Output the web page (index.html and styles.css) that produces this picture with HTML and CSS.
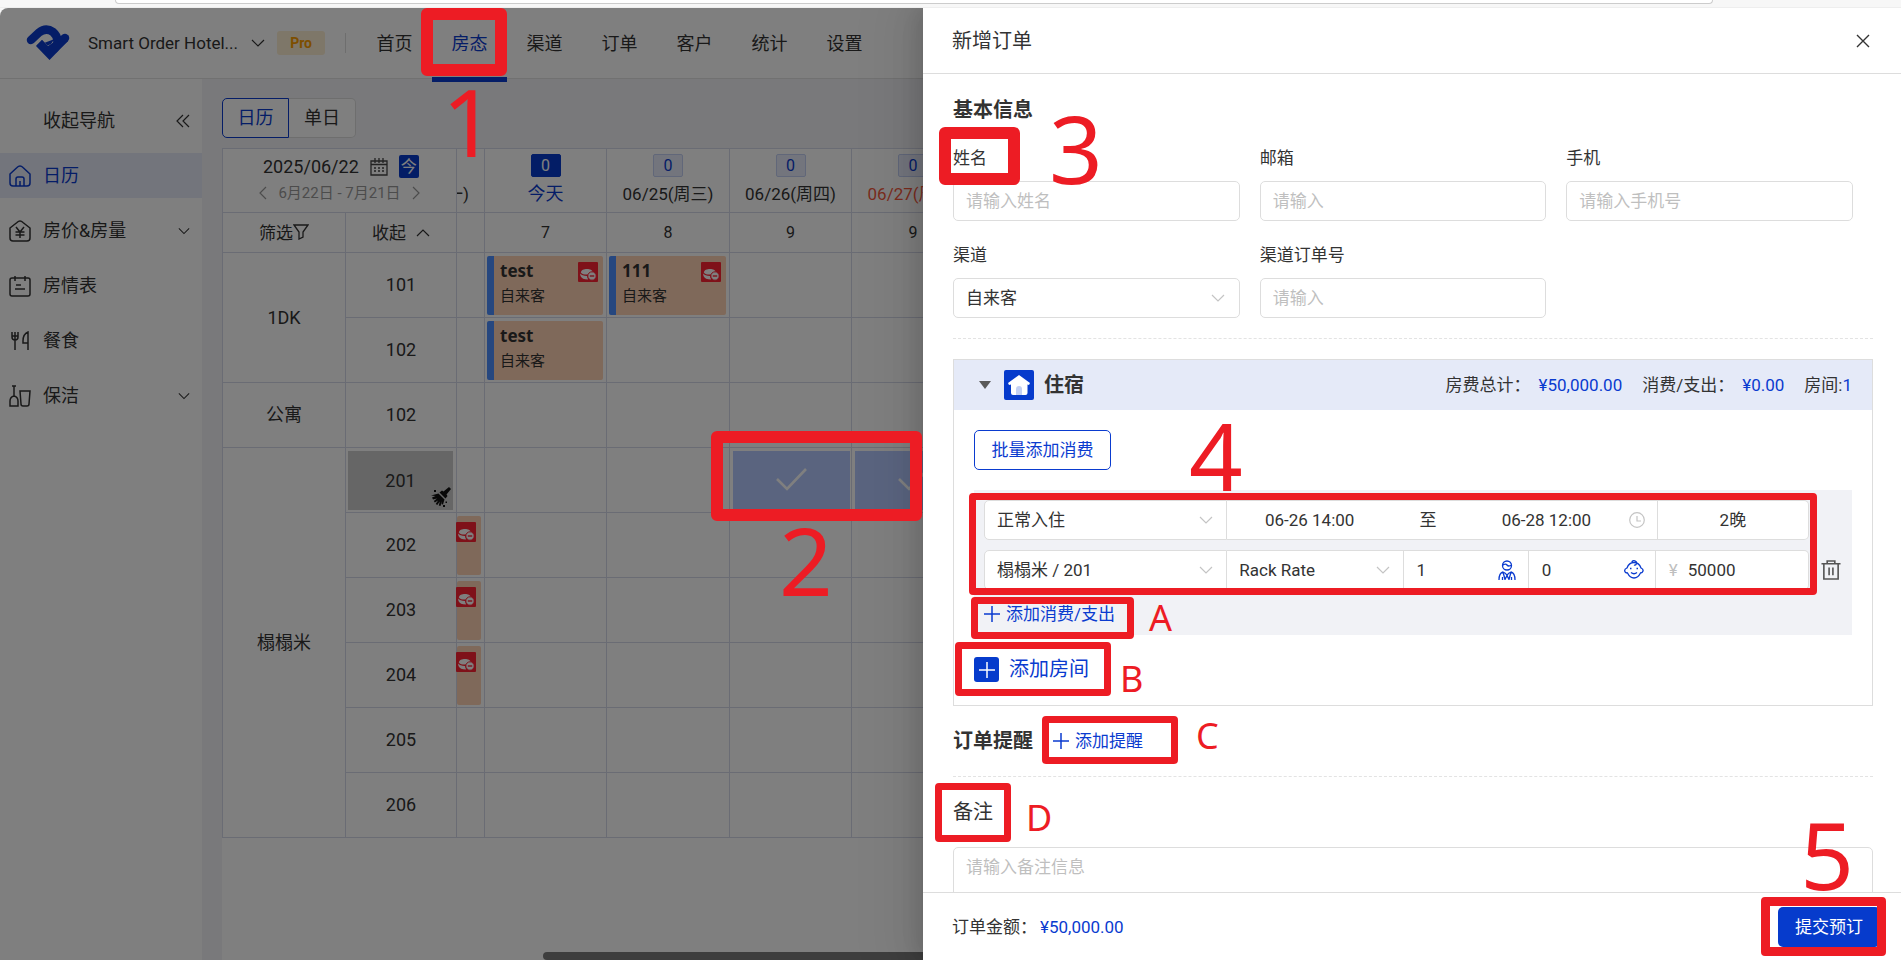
FILE: index.html
```html
<!DOCTYPE html>
<html lang="zh-CN">
<head>
<meta charset="utf-8">
<title>新增订单</title>
<link rel="stylesheet" href="styles.css">
</head>
<body>
<svg class="sprite" aria-hidden="true">
  <symbol id="chev" viewBox="0 0 14 14"><path d="M1 4l6 6 6-6" fill="none" stroke="currentColor" stroke-width="1.2"/></symbol>
  <symbol id="plus" viewBox="0 0 16 16"><path d="M8 0v16M0 8h16" fill="none" stroke="currentColor" stroke-width="1.5"/></symbol>
  <symbol id="tick" viewBox="0 0 32 24"><path d="M1 11l10 10L30 1" fill="none" stroke="currentColor" stroke-width="2.6"/></symbol>
  <symbol id="unpaid" viewBox="0 0 20 20"><rect width="20" height="20" rx="1" fill="#ff2233"/><path d="M2.800 10.500C3 8 6 7 9 7s5.500 1.200 5.500 2.800S12 12.500 9.500 12.600 4 12.500 2.800 10.500z" fill="#fff"/><path d="M2 11.500q2 2.300 7 2.500l1 3.500q-6 0-7.500-3.500z" fill="#fff"/><circle cx="14" cy="14" r="4.200" fill="#fff" stroke="#ff2233"/><path d="M11.800 14h4.400" stroke="#ff2233" stroke-width="1.400"/></symbol>
</svg>

<div class="browser-bar"><div class="address"></div></div>

<div class="app">
  <header class="topbar">
    <svg class="logo" viewBox="0 0 44 36"><path d="M5 15l8-7.500Q20 2 27 7q6 5 4 13l-3 4" fill="none" stroke="#0a3bcf" stroke-width="8.500" stroke-linecap="round" stroke-linejoin="round"/><path d="M10 21l6-6 5.500 5.500q4-1 5.500-4.500l4 1 7-6.500" fill="#0a3bcf"/><path d="M30 21l9-8" stroke="#0a3bcf" stroke-width="8.500" stroke-linecap="round"/><path d="M10 21l6-6 6 6 6-4 14-1L23.500 35z" fill="#0a3bcf"/></svg>
    <button class="hotel" type="button">Smart Order Hotel... <svg class="i14"><use href="#chev"/></svg></button>
    <span class="pro">Pro</span>
    <nav class="menu">
      <a href="#">首页</a><a href="#" class="on">房态</a><a href="#">渠道</a><a href="#">订单</a><a href="#">客户</a><a href="#">统计</a><a href="#">设置</a>
    </nav>
  </header>

  <div class="body">
    <aside class="side">
      <button class="fold" type="button">收起导航 <svg class="i14" viewBox="0 0 14 14"><path d="M7 1L1 7l6 6M13 1L7 7l6 6" fill="none" stroke="#333" stroke-width="1.2"/></svg></button>
      <a href="#" class="on"><svg class="i22" viewBox="0 0 22 22"><path d="M1 9l7-6.500q3-3 6 0L21 9v9q0 3-3 3H4q-3 0-3-3zM7 21v-7q0-2 2-2h4q2 0 2 2v7M11 16v5"/></svg>日历</a>
      <a href="#"><svg class="i22" viewBox="0 0 22 22"><path d="M1 8l7-5.500q3-3 6 0L21 8v10q0 3-3 3H4q-3 0-3-3zM7 7l4 5 4-5M6.500 12h9M6.500 15h9M11 12v6"/></svg>房价&amp;房量<svg class="i12"><use href="#chev"/></svg></a>
      <a href="#"><svg class="i22" viewBox="0 0 22 22"><path d="M3 3h16q2 0 2 2v14q0 2-2 2H3q-2 0-2-2V5q0-2 2-2zM6 1v5M16 1v5M7 10h5M6 14h10"/></svg>房情表</a>
      <a href="#"><svg class="i22" viewBox="0 0 22 22"><path d="M3 2v5q0 3 3 3t3-3V2M6 2v18M3 6h6M19 20V2q-5 2-5 9v2h5"/></svg>餐食</a>
      <a href="#"><svg class="i22" viewBox="0 0 22 22"><path d="M5 1v10q-4 1-4 5v5h8v-5q0-4-4-5M3 1h4M11 6h10l-1 13q0 2-2 2h-4q-2 0-2-2z"/></svg>保洁<svg class="i12"><use href="#chev"/></svg></a>
    </aside>

    <main class="main">
      <div class="tabs"><button class="on" type="button">日历</button><button type="button">单日</button></div>
      <div class="board">
        <table class="cal">
          <colgroup><col class="c-type"><col class="c-room"><col class="c-cut"><col class="c-day"><col class="c-day wide"><col class="c-day"><col class="c-day wide"><col class="c-day"><col></colgroup>
          <thead>
            <tr class="dates">
              <th colspan="2">
                <div class="picker">2025/06/22
                  <svg class="i18" viewBox="0 0 18 18"><path d="M1 3h16v14H1zM1 6.500h16M5 0v5M9 0v5M13 0v5M4 10h2M8 10h2M12 10h2M4 13h2M8 13h2M12 13h2" fill="none" stroke="#444" stroke-width="1.3"/></svg>
                  <button class="today" type="button">今</button></div>
                <div class="range"><svg class="i14 left"><use href="#chev"/></svg>6月22日 - 7月21日<svg class="i14 right"><use href="#chev"/></svg></div>
              </th>
              <th class="cut"><span>06/23(周一)</span></th>
              <th class="now"><b>0</b>今天</th>
              <th><b>0</b>06/25(周三)</th>
              <th><b>0</b>06/26(周四)</th>
              <th class="busy"><b>0</b>06/27(周五)</th>
              <th class="busy"><b>0</b>06/28(周六)</th><th></th>
            </tr>
            <tr class="counts">
              <th class="cjk">筛选<svg class="i16" viewBox="0 0 16 16"><path d="M1 1h14L10 8v5l-4 2V8z" fill="none" stroke="#333" stroke-width="1.3"/></svg></th>
              <th class="cjk">收起 <svg class="i14 up"><use href="#chev"/></svg></th>
              <th></th><th>7</th><th>8</th><th>9</th><th>9</th><th>9</th><th></th>
            </tr>
          </thead>
          <tbody>
            <tr><th rowspan="2">1DK</th><th>101</th><td></td>
              <td><div class="stay"><strong>test</strong><small>自来客</small><svg class="tag"><use href="#unpaid"/></svg></div></td>
              <td><div class="stay"><strong>111</strong><small>自来客</small><svg class="tag"><use href="#unpaid"/></svg></div></td>
              <td></td><td></td><td></td><td></td></tr>
            <tr><th>102</th><td></td><td><div class="stay"><strong>test</strong><small>自来客</small></div></td><td></td><td></td><td></td><td></td><td></td></tr>
            <tr><th>公寓</th><th>102</th><td></td><td></td><td></td><td></td><td></td><td></td><td></td></tr>
            <tr><th rowspan="6">榻榻米</th><th><div class="dirty">201<svg class="broom" viewBox="0 0 20 20"><path d="M18 0l2 2-4.500 5.500 1 1.500-2 2.500-6-6L11 3.500l1.500 1z" fill="#111"/><path d="M7.500 6.500l6 6-1.500 5-1.500-.3.300-3-1.300 4.800-1.700-.5 1-4-2.500 3.500-1.600-1L7 13.500 3.800 15.500l-1-1.600L6 11.500l-4 1L1 10.500 4.500 9 0 8.500z" fill="#111"/><path d="M12 18h2v2h-2zM14.500 14.500h1.500v1.500h-1.500zM3 3h2v2H3z" fill="#111"/></svg></div></th><td></td><td></td><td></td>
              <td><div class="pick"><svg><use href="#tick"/></svg></div></td><td><div class="pick"><svg><use href="#tick"/></svg></div></td><td></td><td></td></tr>
            <tr><th>202</th><td><div class="stay end"><svg class="tag"><use href="#unpaid"/></svg></div></td><td></td><td></td><td></td><td></td><td></td><td></td></tr>
            <tr><th>203</th><td><div class="stay end"><svg class="tag"><use href="#unpaid"/></svg></div></td><td></td><td></td><td></td><td></td><td></td><td></td></tr>
            <tr><th>204</th><td><div class="stay end"><svg class="tag"><use href="#unpaid"/></svg></div></td><td></td><td></td><td></td><td></td><td></td><td></td></tr>
            <tr><th>205</th><td></td><td></td><td></td><td></td><td></td><td></td><td></td></tr>
            <tr><th>206</th><td></td><td></td><td></td><td></td><td></td><td></td><td></td></tr>
          </tbody>
        </table>
        <div class="hscroll"></div>
      </div>
    </main>
  </div>

  <div class="mask"></div>

  <section class="drawer" role="dialog" aria-label="新增订单">
    <header class="d-head"><h1>新增订单</h1><button type="button" aria-label="关闭"><svg class="i14" viewBox="0 0 14 14"><path d="M1 1l12 12M13 1L1 13" stroke="#333" stroke-width="1.4"/></svg></button></header>
    <div class="d-body">
      <h2>基本信息</h2>
      <div class="fields">
        <div class="field"><label for="name">姓名</label><input id="name" placeholder="请输入姓名"></div>
        <div class="field"><label for="mail">邮箱</label><input id="mail" placeholder="请输入"></div>
        <div class="field"><label for="tel">手机</label><input id="tel" placeholder="请输入手机号"></div>
        <div class="field"><label for="chan">渠道</label><div class="pull"><select id="chan"><option>自来客</option></select><svg class="i14"><use href="#chev"/></svg></div></div>
        <div class="field"><label for="no">渠道订单号</label><input id="no" placeholder="请输入"></div>
      </div>
      <hr>
      <section class="card">
        <header class="c-head">
          <span class="tri"></span>
          <svg class="i30" viewBox="0 0 30 30"><rect width="30" height="30" rx="2" fill="#063bcc"/><path d="M15 5l11 8-1 2-1.500-.5V23q0 2-2 2H9q-2 0-2-2v-8.500L5 15l-1-2z" fill="#fff"/><path d="M12 25v-6q0-3 3-3t3 3v6z" fill="#c3d0f3"/></svg>
          <h3>住宿</h3>
          <p>房费总计：<em>¥50,000.00</em></p><p>消费/支出：<em>¥0.00</em></p><p>房间:<em class="tight">1</em></p>
        </header>
        <div class="c-body">
          <button class="outline" type="button">批量添加消费</button>
          <div class="panel">
            <div class="row r1">
              <div class="pull"><select aria-label="入住类型"><option>正常入住</option></select><svg class="i14"><use href="#chev"/></svg></div>
              <div class="span"><input aria-label="入住时间" value="06-26 14:00"><span>至</span><input aria-label="退房时间" value="06-28 12:00">
                <svg class="i16" viewBox="0 0 16 16"><path d="M8 4v5h4M8 .7a7.300 7.300 0 100 14.600A7.300 7.300 0 008 .7z" fill="none" stroke="#c4c4c4" stroke-width="1.200"/></svg></div>
              <div class="nights">2晚</div>
            </div>
            <div class="row r2">
              <div class="pull"><select aria-label="房间"><option>榻榻米 / 201</option></select><svg class="i14"><use href="#chev"/></svg></div>
              <div class="pull"><select aria-label="价格"><option>Rack Rate</option></select><svg class="i14"><use href="#chev"/></svg></div>
              <div class="num"><input aria-label="成人" value="1"><svg class="i20" viewBox="0 0 20 20"><path d="M14.500 5.500a4.500 4.500 0 11-9 0 4.500 4.500 0 019 0zM5.500 5.500q3-2.500 4.500-.5t4.500 0M2 20q0-7 4-8 3 1 4 3.500 1-2.500 4-3.500 4 1 4 8M5.500 20v-3M14.500 20v-3M6 12l2 7.500 2-4 2 4 2-7.500"/></svg></div>
              <div class="num"><input aria-label="儿童" value="0"><svg class="i20" viewBox="0 0 20 20"><path d="M10 2.500q5 0 7 5.500 2.500 1 2 3t-2.500 2q-2.500 5-6.500 5t-6.500-5Q1 13 .7 11T3 8q2-5.500 7-5.500zM8 2.500q0-2 2-1.800 3 .5 2.500 3-1 2-2.500 1.300M6 8.500h1.500M12.500 8.500H14M7 12.500q3 2.500 6 0"/></svg></div>
              <div class="num money"><span>¥</span><input aria-label="金额" value="50000"></div>
            </div>
            <button class="trash" type="button" aria-label="删除"><svg class="i20" viewBox="0 0 20 21"><path d="M0 4h20M6 4V1h8v3M2.500 4v16h15V4M8 8v8M12 8v8" fill="none" stroke="#555" stroke-width="1.700"/></svg></button>
            <button class="link add" type="button"><svg class="i16"><use href="#plus"/></svg>添加消费/支出</button>
          </div>
          <button class="link room" type="button"><span><svg class="i16"><use href="#plus"/></svg></span>添加房间</button>
        </div>
      </section>
      <div class="remind"><h2>订单提醒</h2><button class="link" type="button"><svg class="i16"><use href="#plus"/></svg>添加提醒</button></div>
      <hr>
      <label class="note" for="note">备注</label>
      <textarea id="note" placeholder="请输入备注信息"></textarea>
    </div>
    <footer class="d-foot"><p>订单金额：<em>¥50,000.00</em></p><button type="button">提交预订</button></footer>

    <div class="box wide b3"></div><span class="big n3">3</span>
    <div class="box b4"></div><span class="big n4">4</span>
    <div class="box ba"></div><span class="letter la">A</span>
    <div class="box bb"></div><span class="letter lb">B</span>
    <div class="box bc"></div><span class="letter lc">C</span>
    <div class="box bd"></div><span class="letter ld">D</span>
    <div class="box b5"></div><span class="big n5">5</span>
  </section>

  <div class="box wide b1"></div><span class="big n1">1</span>
  <div class="box wide b2"></div><span class="big n2">2</span>
</div>
</body>
</html>
```

FILE: styles.css
```css
* { box-sizing: border-box; }
body {
  margin: 0;
  height: 100vh;
  display: flex;
  flex-direction: column;
  background: #f7f7f7;
  color: #333;
  font: 17px/28px Roboto, "Noto Sans CJK SC", sans-serif;
  overflow: hidden;
}
h1, h2, h3, p { margin: 0; font-weight: 400; }
em { font-style: normal; }
a { color: inherit; text-decoration: none; }
button, input, select, textarea { font: inherit; color: inherit; border: 0; background: none; padding: 0; margin: 0; border-radius: 0; outline: 0; min-width: 0; }
::placeholder { color: #bfbfbf; opacity: 1; }
svg { flex: none; display: block; }
.sprite { position: absolute; width: 0; height: 0; }
.i12 { width: 12px; height: 12px; }
.i14 { width: 14px; height: 14px; }
.i16 { width: 16px; height: 16px; }
.i18 { width: 18px; height: 18px; }
.i20 { width: 20px; height: 20px; }
.i22 { width: 22px; height: 22px; }
.i30 { width: 30px; height: 30px; }

.browser-bar { flex: none; height: 8px; padding: 0 188px 0 115px; border-bottom: 1px solid #eee; }
.address { height: 4px; background: #fff; border: 1px solid #ccc; border-top: 0; border-radius: 0 0 12px 12px; }

.app { flex: 1; min-height: 0; position: relative; display: flex; flex-direction: column; background: #fff; border-radius: 8px 0 0 0; overflow: hidden; }
.topbar { flex: none; height: 71px; display: flex; align-items: center; padding-left: 26px; border-bottom: 1px solid #e3e3e3; }
.logo { width: 44px; height: 36px; }
.hotel { display: flex; align-items: center; gap: 13px; margin-left: 18px; }
.pro { margin-left: 12px; width: 48px; line-height: 24px; border-radius: 3px; background: #fdeed2; color: #fa9d00; font-size: 14px; font-weight: 700; text-align: center; }
.menu { display: flex; height: 100%; margin-left: 20px; position: relative; padding-left: 11px; }
.menu::before { content: ""; align-self: center; height: 20px; border-left: 1px solid #ddd; margin-left: -11px; margin-right: 11px; }
.menu a { width: 75px; height: 74px; line-height: 72px; text-align: center; font-size: 18px; }
.menu .on { color: #0a3bcf; border-bottom: 5px solid #0a3bcf; }

.body { flex: 1; min-height: 0; display: flex; }
.side { flex: none; width: 202px; display: flex; flex-direction: column; gap: 10px; }
.fold { display: flex; align-items: center; justify-content: space-between; height: 64px; padding: 20px 12px 0 43px; font-size: 18px; }
.side a { display: flex; align-items: center; height: 45px; padding: 0 12px 0 9px; gap: 12px; font-size: 18px; }
.side a .i12 { margin-left: auto; }
.side a .i22 { fill: none; stroke: currentColor; stroke-width: 1.5; }
.side .on { background: #e6eaf8; color: #0a3bcf; }

.main { flex: 1; min-width: 0; background: #f2f3f7; padding: 19px 0 0 20px; display: flex; flex-direction: column; }
.tabs { display: flex; flex: none; margin-bottom: 10px; font-size: 18px; }
.tabs button { width: 67px; height: 40px; background: #fff; border: 1px solid #ddd; border-left: 0; border-radius: 0 5px 5px 0; }
.tabs .on { border: 1px solid #0a3bcf; color: #0a3bcf; border-radius: 5px 0 0 5px; }
.board { flex: 1; min-height: 0; background: #fff; overflow: hidden; position: relative; }
.hscroll { position: absolute; left: 321px; right: 0; bottom: 0; height: 8px; border-radius: 4px; background: #7c7c7c; }

.cal { width: 100%; table-layout: fixed; border-collapse: collapse; }
.c-type { width: 123px; } .c-room { width: 111px; } .c-cut { width: 28px; } .c-day { width: 122px; } .c-day.wide { width: 123px; }
.cal th, .cal td { border: 1px solid #d4d8e8; padding: 0; font-weight: 400; text-align: center; }
.cal tr { height: 65px; }
.cal tbody th { font-size: 18px; }
.cal .dates { height: 64px; }
.cal .counts { height: 40px; font-size: 16px; }
.cal .counts .cjk { font-size: 17px; }
.counts svg { display: inline-block; vertical-align: -1px; }
.counts .i14 { margin-left: 6px; }
.up { transform: rotate(180deg); }
.left { transform: rotate(90deg); }
.right { transform: rotate(-90deg); }
.picker { display: flex; align-items: center; gap: 11px; padding-left: 40px; font-size: 18px; line-height: 24px; }
.today { width: 20px; height: 23px; line-height: 22px; border-radius: 2px; background: #063bcc; color: #fff; font-size: 16px; }
.range { display: flex; align-items: center; justify-content: center; gap: 8px; font-size: 15px; color: #999; }
.dates b { display: block; width: 30px; line-height: 21px; margin: 0 auto 3px; border: 1px solid #c3cff2; border-radius: 2px; background: #e6ebfa; color: #0a3bcf; font-size: 16px; font-weight: 400; }
.dates .now { color: #0a3bcf; font-size: 18px; }
.dates .now b { background: #063bcc; border-color: #063bcc; color: #fff; }
.dates .busy { color: #f5593d; }
.cut { overflow: hidden; }
.cut span { display: flex; justify-content: flex-end; padding: 26px 15px 0 0; white-space: nowrap; }

.stay { position: relative; height: 59px; margin: 0 3px 0 2px; padding: 2px 0 0 6px; display: flex; flex-direction: column; text-align: left; border-left: 7px solid #4c8eff; border-radius: 2px; background: #ffd2b4; font: 14px/22px "Noto Sans", "Noto Sans CJK SC", sans-serif; }
.stay strong { font-size: 17px; line-height: 26px; }
.stay small { font-size: 15px; }
.tag { position: absolute; right: 5px; top: 6px; width: 20px; height: 20px; }
.stay.end { border-left: 0; margin-left: 0; }
.pick { height: 59px; margin: 0 1px 0 3px; background: #b4c8ff; display: flex; align-items: center; justify-content: center; color: #fff; }
.pick svg { width: 32px; height: 24px; }
.dirty { position: relative; height: 59px; line-height: 59px; margin: 0 3px 0 2px; background: #ccc; }
.broom { position: absolute; right: 2px; bottom: 3px; width: 20px; height: 20px; }

.mask { position: absolute; inset: 0; background: rgba(0, 0, 0, .5); }

.drawer { position: absolute; top: 0; right: 0; bottom: 0; width: 978px; max-width: 100%; display: flex; flex-direction: column; background: #fff; box-shadow: -6px 0 16px rgba(0, 0, 0, .08), -9px 0 28px rgba(0, 0, 0, .05), -12px 0 48px 16px rgba(0, 0, 0, .06); }
.d-head { flex: none; display: flex; align-items: center; justify-content: space-between; height: 66px; padding: 0 31px 0 29px; border-bottom: 1px solid #ddd; }
h1, h2, h3 { font-size: 20px; line-height: 30px; }
h2, h3 { font-weight: 700; }
.d-body { flex: 1; min-height: 0; overflow: hidden; padding: 21px 28px 0 30px; }
hr { border: 0; border-top: 1px dashed #e3e3e3; margin: 20px 0; }
.fields { display: grid; grid-template-columns: repeat(3, 1fr); gap: 20px; margin: 19px 20px 0 0; }
.field { display: flex; flex-direction: column; gap: 9px; }
.field input, .field select { width: 100%; height: 40px; padding: 0 12px; border: 1px solid #ddd; border-radius: 5px; background: #fff; }
.pull { position: relative; display: flex; }
.pull select { width: 100%; appearance: none; }
.pull svg { position: absolute; right: 15px; top: 13px; color: #c4c4c4; pointer-events: none; }

.card { border: 1px solid #ddd; }
.c-head { display: flex; align-items: center; height: 50px; padding: 0 20px 0 25px; background: #e5eaf8; }
.c-head h3 { margin: 0 auto 0 10px; }
.c-head p { margin-left: 20px; }
.c-head em { color: #0a3bcf; margin-left: 8px; }
.c-head .tight { margin-left: 0; }
.tri { border: 6px solid transparent; border-top: 8px solid #595959; border-bottom: 0; margin-right: 13px; }
.c-body { padding: 20px 20px 23px; }
.outline { display: block; width: 137px; height: 40px; border: 1px solid #0a3bcf; border-radius: 5px; color: #0a3bcf; }
.panel { display: grid; grid-template-columns: 1fr 33px; row-gap: 10px; margin: 20px 0 22px; padding: 10px 10px 7px; background: #f1f2f6; }
.row { display: grid; height: 40px; grid-column: 1; }
.r1 { grid-template-columns: 243fr 430fr 151fr; }
.r2 { grid-template-columns: 243fr 176fr 125fr 127fr 153fr; }
.row > * { background: #fff; border: 1px solid #ddd; border-left-width: 0; min-width: 0; display: flex; align-items: center; }
.row > :first-child { border-left-width: 1px; border-radius: 5px 0 0 5px; }
.row > :last-child { border-radius: 0 5px 5px 0; }
.row select { height: 38px; padding-left: 12px; }
.row .pull svg { top: 12px; right: 13px; }
.span { padding-right: 12px; }
.span input { flex: 1; width: 0; text-align: center; }
.span span { width: 72px; text-align: center; }
.nights { justify-content: center; }
.num { padding: 0 11px 0 13px; }
.num input { flex: 1; width: 0; }
.num svg { fill: none; stroke: #0a3bcf; stroke-width: 1.3; }
.money span { color: #bfbfbf; margin-right: 10px; }
.trash { grid-column: 2; grid-row: 2; display: flex; align-items: center; justify-content: center; padding-left: 10px; }
.link { display: flex; align-items: center; gap: 6px; color: #0a3bcf; }
.add { grid-column: 1; justify-self: start; }
.room { gap: 10px; font-size: 20px; line-height: 25px; }
.room span { display: flex; align-items: center; justify-content: center; width: 25px; height: 25px; border-radius: 3px; background: #063bcc; color: #fff; }
.remind { display: flex; align-items: center; gap: 20px; margin-top: 20px; }
.note { display: block; font-size: 20px; line-height: 30px; }
textarea { display: block; width: 100%; height: 100px; margin-top: 20px; padding: 5px 12px; border: 1px solid #ddd; border-radius: 5px; resize: none; }
.d-foot { flex: none; display: flex; align-items: center; justify-content: space-between; height: 68px; padding: 0 21px 0 29px; border-top: 1px solid #ddd; background: #fff; }
.d-foot em { color: #0a3bcf; margin-left: 3px; }
.d-foot button { width: 102px; height: 40px; border-radius: 5px; background: #063bcc; color: #fff; }

/* Step markers drawn over the screen */
.box { position: absolute; border: 7px solid #ed1c24; border-radius: 4px; pointer-events: none; }
.box.wide { border-width: 12px; border-radius: 6px; }
.big, .letter { position: absolute; color: #ed1c24; font-family: "Noto Sans", sans-serif; line-height: 1; pointer-events: none; }
.big { font-size: 94px; }
.letter { font-size: 36px; }
.b1 { left: 421px; top: 0; width: 86px; height: 68px; }
.n1 { left: 442px; top: 66px; }
.b2 { left: 711px; top: 423px; width: 211px; height: 90px; }
.n2 { left: 779px; top: 505px; }
.b3 { left: 16px; top: 119px; width: 81px; height: 58px; }
.n3 { left: 126px; top: 93px; }
.b4 { left: 46px; top: 485px; right: 84px; height: 102px; }
.n4 { left: 266px; top: 400px; }
.ba { left: 48px; top: 589px; width: 163px; height: 42px; }
.la { left: 226px; top: 592px; }
.bb { left: 32px; top: 634px; width: 156px; height: 54px; }
.lb { left: 197px; top: 653px; }
.bc { left: 119px; top: 708px; width: 136px; height: 48px; }
.lc { left: 273px; top: 710px; }
.bd { left: 12px; top: 775px; width: 76px; height: 59px; }
.ld { left: 103px; top: 792px; }
.b5 { right: 15px; bottom: 4px; width: 125px; height: 59px; border-width: 9px; }
.n5 { right: 47px; bottom: 59px; }
```
